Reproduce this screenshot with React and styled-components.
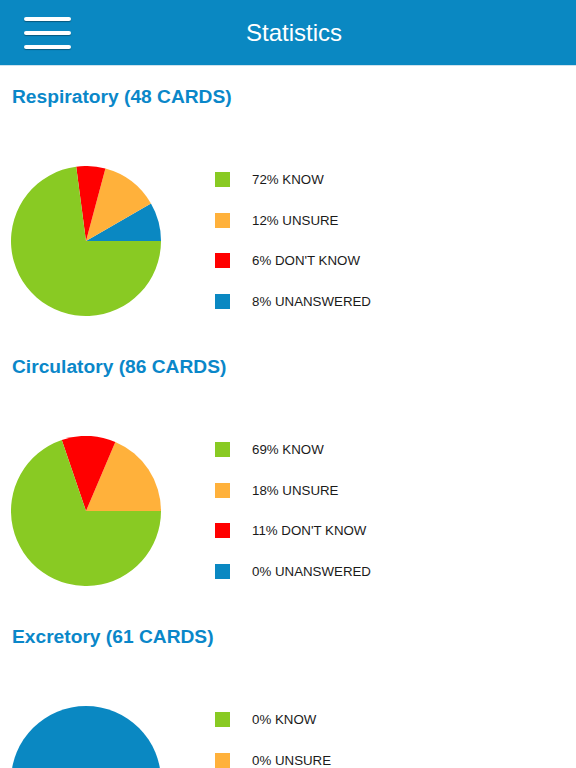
import React from "react";
import styled, { createGlobalStyle } from "styled-components";

const GlobalStyle = createGlobalStyle`
  html, body {
    margin: 0;
    padding: 0;
    background: #ffffff;
    font-family: "Liberation Sans", Arial, Helvetica, sans-serif;
  }
`;

const COLORS = {
  know: "#89ca23",
  unsure: "#ffb13b",
  dontKnow: "#ff0000",
  unanswered: "#0a88c2",
};

const Page = styled.div`
  width: 100%;
  background: #ffffff;
`;

const Header = styled.header`
  height: 65px;
  display: grid;
  grid-template-columns: 96px 1fr 84px;
  align-items: center;
  background: #0a88c2;
  border-bottom: 1px solid #cde2ee;
`;

const MenuButton = styled.div`
  width: 47px;
  margin-left: 24px;
  display: flex;
  flex-direction: column;
  gap: 10px;
  margin-top: 1px;
`;

const MenuBar = styled.span`
  display: block;
  height: 4px;
  border-radius: 2px;
  background: #ffffff;
  box-shadow: 0 1px 1px rgba(0, 0, 0, 0.35);
`;

const Title = styled.h1`
  margin: 0;
  text-align: center;
  font-size: 24px;
  font-weight: 400;
  color: #ffffff;
  line-height: 1;
`;

const Section = styled.section`
  padding-top: 19px;
`;

const Heading = styled.h2`
  margin: 0 0 0 12px;
  font-size: 19.2px;
  line-height: 24px;
  font-weight: 700;
  color: #0a87c9;
`;

const ChartRow = styled.div`
  margin-top: 36px;
  height: 191px;
  display: flex;
  align-items: center;
  padding-left: 11px;
  gap: 54px;
`;

const Legend = styled.ul`
  list-style: none;
  margin: 0;
  padding: 0;
  display: flex;
  flex-direction: column;
`;

const LegendRow = styled.li`
  height: 40.5px;
  display: flex;
  align-items: center;
  gap: 22px;
`;

const Swatch = styled.span`
  width: 15px;
  height: 15px;
  background: ${({ color }) => color};
`;

const LegendText = styled.span`
  font-size: 13.3px;
  color: #1a1a1a;
`;

const sections = [
  { name: "Respiratory", know: 35, unsure: 6, dontKnow: 3, unanswered: 4 },
  { name: "Circulatory", know: 60, unsure: 16, dontKnow: 10, unanswered: 0 },
  { name: "Excretory", know: 0, unsure: 0, dontKnow: 0, unanswered: 61 },
];

const Pie = ({ data }) => {
  const r = 75;
  const c = 75;
  const total = data.know + data.unsure + data.dontKnow + data.unanswered;
  // slices drawn counter-clockwise from 3 o'clock
  const order = ["unanswered", "unsure", "dontKnow", "know"];
  let start = 0;
  const slices = [];
  order.forEach((key) => {
    const value = data[key];
    if (!value) return;
    const sweep = (value / total) * Math.PI * 2;
    if (value === total) {
      slices.push(<circle key={key} cx={c} cy={c} r={r} fill={COLORS[key]} />);
      return;
    }
    const end = start + sweep;
    const x0 = c + r * Math.cos(start);
    const y0 = c - r * Math.sin(start);
    const x1 = c + r * Math.cos(end);
    const y1 = c - r * Math.sin(end);
    const large = sweep > Math.PI ? 1 : 0;
    slices.push(
      <path
        key={key}
        d={`M${c},${c} L${x0},${y0} A${r},${r} 0 ${large} 0 ${x1},${y1} Z`}
        fill={COLORS[key]}
      />
    );
    start = end;
  });
  return (
    <svg width="150" height="150" viewBox="0 0 150 150">
      {slices}
    </svg>
  );
};

const pct = (v, total) => Math.floor((v / total) * 100);

const StatSection = ({ data }) => {
  const total = data.know + data.unsure + data.dontKnow + data.unanswered;
  const rows = [
    { key: "know", label: "KNOW" },
    { key: "unsure", label: "UNSURE" },
    { key: "dontKnow", label: "DON'T KNOW" },
    { key: "unanswered", label: "UNANSWERED" },
  ];
  return (
    <Section>
      <Heading>
        {data.name} ({total} CARDS)
      </Heading>
      <ChartRow>
        <Pie data={data} />
        <Legend>
          {rows.map((row) => (
            <LegendRow key={row.key}>
              <Swatch color={COLORS[row.key]} />
              <LegendText>
                {pct(data[row.key], total)}% {row.label}
              </LegendText>
            </LegendRow>
          ))}
        </Legend>
      </ChartRow>
    </Section>
  );
};

export default function App() {
  return (
    <Page>
      <GlobalStyle />
      <Header>
        <MenuButton>
          <MenuBar />
          <MenuBar />
          <MenuBar />
        </MenuButton>
        <Title>Statistics</Title>
        <span />
      </Header>
      {sections.map((s) => (
        <StatSection key={s.name} data={s} />
      ))}
    </Page>
  );
}
